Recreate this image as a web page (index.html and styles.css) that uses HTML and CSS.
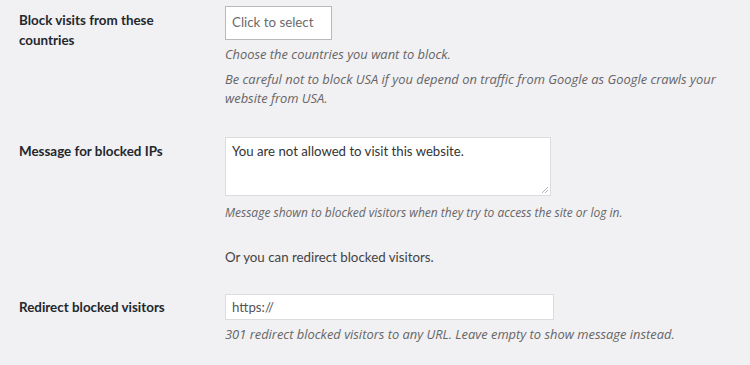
FILE: index.html
```html
<!DOCTYPE html>
<html>
<head>
<meta charset="utf-8">
<link rel="stylesheet" href="styles.css">
</head>
<body>
<div class="form">
  <div class="row row-countries">
    <div class="label">Block visits from these countries</div>
    <div class="field">
      <div class="select">Click to select</div>
      <p class="desc first">Choose the countries you want to block.</p>
      <p class="desc">Be careful not to block USA if you depend on traffic from Google as Google crawls your website from USA.</p>
    </div>
  </div>
  <div class="row row-message">
    <div class="label label-msg">Message for blocked IPs</div>
    <div class="field">
      <div class="textarea">You are not allowed to visit this website.<svg class="grip" width="9" height="9" viewBox="0 0 9 9"><path d="M8 2 L2 8 M8 5 L5 8" stroke="#b5b5b5" stroke-width="1" fill="none"/></svg></div>
      <p class="desc tight small">Message shown to blocked visitors when they try to access the site or log in.</p>
      <p class="note">Or you can redirect blocked visitors.</p>
    </div>
  </div>
  <div class="row row-redirect">
    <div class="label label-redirect">Redirect blocked visitors</div>
    <div class="field">
      <div class="input">https://</div>
      <p class="desc first">301 redirect blocked visitors to any URL. Leave empty to show message instead.</p>
    </div>
  </div>
</div>
</body>
</html>
```
FILE: styles.css
```css
html, body {
  margin: 0;
  padding: 0;
  background: #f1f0f3;
}
body {
  font-family: "Lato", "Open Sans", sans-serif;
  color: #444;
  font-size: 13.3px;
}
.form {
  padding-left: 19px;
}
.row {
  display: grid;
  grid-template-columns: 206px 1fr;
}
.row-countries {
  padding-top: 6px;
}
.row-message {
  padding-top: 28px;
}
.row-redirect {
  padding-top: 27px;
}
.label {
  font-weight: 700;
  color: #23282d;
  font-size: 13.4px;
  line-height: 19.5px;
  width: 170px;
  padding-top: 5px;
}
.label-msg {
  padding-top: 5px;
}
.label-redirect {
  padding-top: 4px;
}
.field {
  min-width: 0;
}
.select {
  box-sizing: border-box;
  width: 107px;
  height: 34px;
  border: 1px solid #b9b8bc;
  background: #fff;
  color: #6b6b6b;
  font-size: 13.3px;
  line-height: 30px;
  padding-left: 6px;
}
.desc {
  margin: 5px 0 0;
  font-family: "Open Sans", sans-serif;
  font-style: italic;
  color: #666;
  font-size: 12.9px;
  line-height: 19.5px;
  max-width: 500px;
}
.desc.first {
  margin-top: 5px;
}
.desc.tight {
  margin-top: 7px;
}
.desc.small {
  font-size: 12px;
}
.textarea {
  position: relative;
  box-sizing: border-box;
  width: 326px;
  height: 59px;
  border: 1px solid #dcdcde;
  background: #fff;
  color: #333;
  font-size: 13.2px;
  line-height: 20px;
  padding: 3px 6px;
}
.grip {
  position: absolute;
  right: 1px;
  bottom: 1px;
}
.note {
  margin: 25px 0 0;
  color: #444;
  font-size: 13.3px;
  line-height: 20px;
}
.input {
  box-sizing: border-box;
  width: 329px;
  height: 26px;
  border: 1px solid #dcdcde;
  background: #fff;
  color: #555;
  font-size: 13.3px;
  line-height: 24px;
  padding-left: 6px;
}
```
